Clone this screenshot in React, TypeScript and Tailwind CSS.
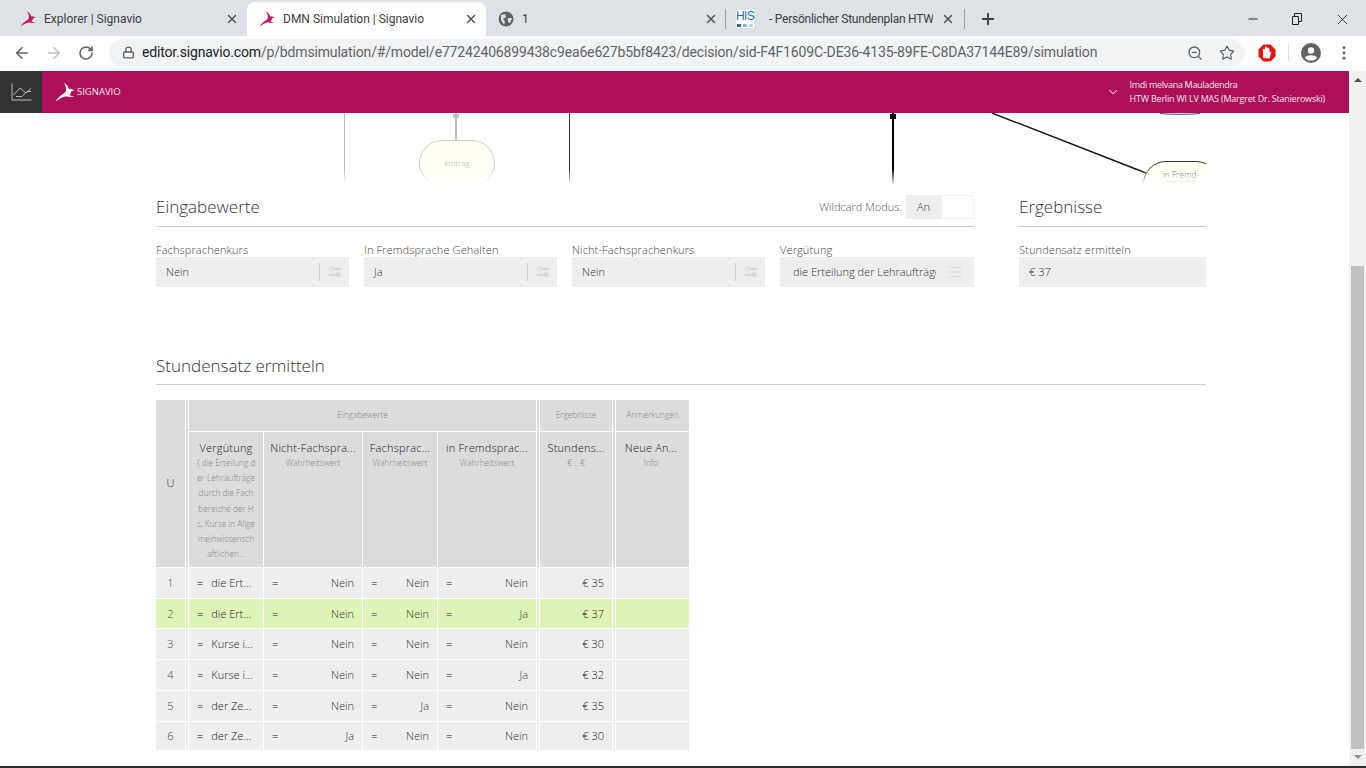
import { ArrowLeft, ArrowRight, ChevronDown, Lock, Minus, Plus, RotateCw, Star, X, ZoomOut } from 'lucide-react';

const Gazelle = ({ className }: { className: string }) => (
  <svg viewBox="0 0 24 24" className={className} fill="currentColor">
    <path d="M0.5 23.5 C3 19.5 6 16.5 9.5 14.5 C11 13.5 12.2 12.8 13 11.5 C13.8 8 13 4 10.5 0.5 C14 2.5 16.2 5.5 16.6 8.4 L19 8 L23.5 10.2 L19.5 11 C19 13 18.5 14.5 17 16 L23 17.5 C19 18.2 15.5 18 13.5 17 C9 18 4.5 20.5 0.5 23.5 Z" />
  </svg>
);

const ChartIcon = () => (
  <svg viewBox="0 0 21 18" className="h-[18px] w-[21px]" fill="none" stroke="#c9c9c9" strokeWidth="0.9">
    <path d="M1 0.5 V17 H20.5" />
    <path d="M2.5 12 L9 5 L15 10 L20 5.5" />
    <path d="M5 13.5 H11 L16 8.5 H20" />
  </svg>
);

const SliderIcon = () => (
  <svg viewBox="0 0 12 12" className="h-3 w-3" fill="none" stroke="#d6d6d6" strokeWidth="1.4">
    <circle cx="2.6" cy="2.8" r="1.9" strokeWidth="1" />
    <path d="M5 2.8 H12" strokeWidth="2" />
    <path d="M0 8.8 H7" strokeWidth="2" />
    <circle cx="9.2" cy="8.8" r="2.5" fill="#d6d6d6" stroke="none" />
  </svg>
);

const ListIcon = () => (
  <svg viewBox="0 0 12 12" className="h-3 w-3" fill="none" stroke="#d6d6d6" strokeWidth="1">
    <path d="M0 1.5 H2 M3.5 1.5 H12 M0 6 H2 M3.5 6 H12 M0 10.5 H2 M3.5 10.5 H12" />
  </svg>
);

const Field = ({ label, value, icon = 'slider' }: { label: string; value: string; icon?: string }) => (
  <div>
    <div className="h-[14px] text-[11px] leading-[14px] font-light tracking-[0.12px] text-[#444]">{label}</div>
    <div className="flex h-[30px] items-center bg-[#eeeeee] text-[11px] font-light text-[#333]">
      {icon === 'slider' && (
        <>
          <span className="flex-1 pl-[10px]">{value}</span>
          <span className="h-[18px] w-px bg-[#cfcfcf]" />
          <span className="flex w-[29px] justify-center"><SliderIcon /></span>
        </>
      )}
      {icon === 'list' && (
        <>
          <span className="ml-[13px] flex-1 overflow-hidden whitespace-nowrap">{value}</span>
          <span className="flex w-[38px] justify-center"><ListIcon /></span>
        </>
      )}
      {icon === 'none' && <span className="flex-1 pl-[10px]">{value}</span>}
    </div>
  </div>
);

const Head = ({ title, sub }: { title: string; sub: string[] }) => (
  <th className="border-r border-b border-white pt-[8px] align-top font-light">
    <div className="text-[11px] leading-[15px] tracking-[0.2px] text-[#222]">{title}</div>
    {sub.map((s) => (
      <div key={s} className="text-[8.3px] leading-[15.2px] text-[#888]">{s}</div>
    ))}
  </th>
);

const rows = [
  { n: 1, v: 'die Ert...', a: 'Nein', b: 'Nein', c: 'Nein', r: '€ 35', h: 'h-[31px]', bg: 'bg-[#eeeeee]' },
  { n: 2, v: 'die Ert...', a: 'Nein', b: 'Nein', c: 'Ja', r: '€ 37', h: 'h-[30px]', bg: 'bg-[#dff5b8]' },
  { n: 3, v: 'Kurse i...', a: 'Nein', b: 'Nein', c: 'Nein', r: '€ 30', h: 'h-[31px]', bg: 'bg-[#eeeeee]' },
  { n: 4, v: 'Kurse i...', a: 'Nein', b: 'Nein', c: 'Ja', r: '€ 32', h: 'h-[31px]', bg: 'bg-[#eeeeee]' },
  { n: 5, v: 'der Ze...', a: 'Nein', b: 'Ja', c: 'Nein', r: '€ 35', h: 'h-[31px]', bg: 'bg-[#eeeeee]' },
  { n: 6, v: 'der Ze...', a: 'Ja', b: 'Nein', c: 'Nein', r: '€ 30', h: 'h-[29px]', bg: 'bg-[#eeeeee]' },
];

const EqCell = ({ value, left }: { value: string; left?: boolean }) => (
  <td className="border-r border-b border-white px-[8px] pt-[1px]">
    <div className="flex items-center justify-between">
      <span className="font-normal text-[#222]">=</span>
      <span className={left ? 'flex-1 pl-[8px] text-left text-[#222]' : 'text-[#333]'}>{value}</span>
    </div>
  </td>
);

const Diagram = () => (
  <div className="relative h-[72px] overflow-hidden">
    <div className="absolute top-0 left-[188px] h-full w-px bg-[#bdbdbd]" />
    <div className="absolute top-0 left-[299px] h-[28px] w-[2px] bg-[#bdbdbd]" />
    <div className="absolute top-[1px] left-[297px] h-[4px] w-[6px] bg-[#bdbdbd]" />
    <div className="absolute top-[27px] left-[263px] flex h-[46px] w-[76px] items-center justify-center rounded-[23px] border border-[#cfcfc4] bg-[#fffff4] text-[8px] font-light text-[#aaa]">
      Eintrag
    </div>
    <div className="absolute top-0 left-[413px] h-full w-px bg-[#333]" />
    <div className="absolute top-0 left-[736px] h-full w-[2px] bg-black" />
    <div className="absolute top-[1px] left-[734px] h-[5px] w-[6px] bg-black" />
    <svg className="absolute top-0 left-[830px] h-[72px] w-[220px]" viewBox="0 0 220 72" fill="none">
      <path d="M6 0 L160 60" stroke="#111" strokeWidth="1.4" />
      <path d="M174 0.5 C186 1.6 202 1.6 214 0.5" stroke="#222" strokeWidth="0.8" />
    </svg>
    <div className="absolute top-[48px] left-[987px] h-[46px] w-[76px] rounded-[23px] border border-[#333] bg-[#fffff4] pt-[9px] text-center text-[8.5px] leading-[8px] font-light text-[#444]">
      in Fremd-<br />sprache
    </div>
    <div className="absolute right-0 bottom-0 left-0 h-[16px] bg-gradient-to-b from-transparent to-white" />
  </div>
);

export default function App() {
  return (
    <div className="flex h-screen w-full flex-col overflow-hidden bg-white font-['Open_Sans',sans-serif]">
      {/* browser tabs */}
      <div className="flex h-[36px] items-end bg-[#dee1e6] pl-[8px] font-['Roboto',sans-serif] text-[12px] text-[#3c4043]">
        <div className="flex h-[34px] w-[239px] items-center pr-[8px] pl-[12px]">
          <Gazelle className="h-[16px] w-[16px] text-[#c2185b]" />
          <span className="ml-[8px] flex-1">Explorer | Signavio</span>
          <X size={14} strokeWidth={2.5} className="text-[#555]" />
        </div>
        <div className="flex h-[34px] w-[239px] items-center rounded-t-lg bg-white pr-[8px] pl-[12px]">
          <Gazelle className="h-[16px] w-[16px] text-[#c2185b]" />
          <span className="ml-[8px] flex-1">DMN Simulation | Signavio</span>
          <X size={14} strokeWidth={2.5} className="text-[#555]" />
        </div>
        <div className="flex h-[34px] w-[240px] items-center pl-[12px]">
          <svg viewBox="0 0 16 16" className="h-[16px] w-[16px]">
            <circle cx="8" cy="8" r="7.5" fill="#5f6368" />
            <path d="M3 4 L7 3 L8 6 L5 8 L7 11 L6 14 L3 9 Z M10 7 L14 7 L12 12 L10 11 Z" fill="#dee1e6" />
          </svg>
          <span className="ml-[8px] flex-1">1</span>
          <X size={14} strokeWidth={2.5} className="text-[#555]" />
          <span className="ml-[7px] h-[20px] w-px bg-[#9aa0a6]" />
        </div>
        <div className="flex h-[34px] w-[239px] items-center pl-[10px]">
          <span className="flex h-[18px] w-[18px] flex-col items-center bg-white font-['Liberation_Sans',sans-serif] text-[12px] leading-[13px] tracking-[-0.6px] text-[#1f6fb2]">
            HIS
            <span className="mt-[1px] flex w-[16px] justify-between">
              <span className="h-[3px] w-[4px] bg-[#1f6fb2]" />
              <span className="h-[3px] w-[4px] bg-[#8fb4d6]" />
              <span className="h-[3px] w-[4px] bg-[#c4d6e6]" />
            </span>
          </span>
          <span className="ml-[15px] w-[164px] overflow-hidden tracking-[-0.25px] whitespace-nowrap">- Persönlicher Stundenplan HTW</span>
          <X size={14} strokeWidth={2.5} className="ml-[8px] text-[#555]" />
          <span className="ml-[9px] h-[20px] w-px bg-[#9aa0a6]" />
        </div>
        <div className="flex h-[34px] flex-1 items-center pl-[14px]">
          <Plus size={18} strokeWidth={2.5} className="text-[#3c4043]" />
          <div className="flex-1" />
          <Minus size={14} className="mr-[30px] text-[#222]" />
          <svg viewBox="0 0 12 12" className="mr-[32px] h-[12px] w-[12px]" fill="none" stroke="#222">
            <path d="M2.5 3.5 H8.5 V11.5 H2.5 Z M4.5 3.5 V0.5 H11.5 V8.5 H8.5" />
          </svg>
          <X size={17} strokeWidth={1.2} className="mr-[15px] text-[#222]" />
        </div>
      </div>

      {/* browser toolbar */}
      <div className="flex h-[35px] items-center bg-white pb-[2px] text-[#5f6368]">
        <ArrowLeft size={18} strokeWidth={2.2} className="ml-[13px]" />
        <ArrowRight size={18} strokeWidth={2.2} className="ml-[14px] text-[#bdc1c6]" />
        <RotateCw size={16} strokeWidth={2.4} className="ml-[15px]" />
        <div className="ml-[15px] flex h-[28px] w-[1136px] items-center rounded-full bg-[#f1f3f4] pl-[13px] font-['Roboto',sans-serif] text-[14px]">
          <Lock size={13} strokeWidth={2.6} className="mr-[7px]" />
          <span className="flex-1 tracking-[-0.16px] whitespace-nowrap">
            <span className="text-[#202124]">editor.signavio.com</span>
            /p/bdmsimulation/#/model/e77242406899438c9ea6e627b5bf8423/decision/sid-F4F1609C-DE36-4135-89FE-C8DA37144E89/simulation
          </span>
          <ZoomOut size={16} className="mr-[16px]" />
          <Star size={16} strokeWidth={1.8} className="mr-[10px]" />
        </div>
        <svg viewBox="0 0 18 18" className="ml-[13px] h-[18px] w-[18px]">
          <path d="M5.5 0.5 H12.5 L17.5 5.5 V12.5 L12.5 17.5 H5.5 L0.5 12.5 V5.5 Z" fill="#e8130f" />
          <path d="M5 14 V6 C5 4.4 6.8 4.4 7 5.6 V3.4 C7 2.2 8.8 2.2 9 3.4 V4.4 C9.4 3.4 11.4 3.6 11.4 5 V8.4 L13.4 7.6 L11.6 14.6 Z" fill="#fff" />
        </svg>
        <span className="ml-[12px] h-[17px] w-px bg-[#dadce0]" />
        <svg viewBox="0 0 20 20" className="ml-[12px] h-[20px] w-[20px]">
          <circle cx="10" cy="10" r="10" fill="#5f6368" />
          <circle cx="10" cy="7.5" r="3.2" fill="#fff" />
          <path d="M3.8 14.8 C5.5 11.5 14.5 11.5 16.2 14.8 C14.5 16.8 12.5 17.6 10 17.6 C7.5 17.6 5.5 16.8 3.8 14.8 Z" fill="#fff" />
        </svg>
        <svg viewBox="0 0 4 16" className="ml-[21px] h-[14px] w-[4px]" fill="#5f6368">
          <circle cx="2" cy="2" r="1.7" />
          <circle cx="2" cy="8" r="1.7" />
          <circle cx="2" cy="14" r="1.7" />
        </svg>
      </div>

      <div className="flex min-h-0 flex-1">
        <div className="flex min-w-0 flex-1 flex-col">
          {/* app header */}
          <header className="flex h-[42px] items-center bg-[#ad0f58] text-white">
            <div className="flex h-full w-[42px] items-center justify-center bg-[#333333]">
              <ChartIcon />
            </div>
            <Gazelle className="ml-[13px] h-[20px] w-[20px] text-white" />
            <span className="ml-[2px] text-[9.5px] text-[#fbe4ef]">SIGNAVIO</span>
            <div className="flex-1" />
            <ChevronDown size={14} strokeWidth={1.8} className="mr-[10px] text-[#f8dbe8]" />
            <div className="mr-[24px] text-[9px] leading-[14px] text-[#fbe4ef]">
              <div className="tracking-[-0.3px]">Imdi melvana Mauladendra</div>
              <div className="tracking-[-0.21px]">HTW Berlin WI LV MAS (Margret Dr. Stanierowski)</div>
            </div>
          </header>

          {/* page */}
          <main className="ml-[156px] w-[1050px]">
            <Diagram />

            <div className="mt-[10px] grid grid-cols-[818px_187px] gap-x-[45px]">
              <section>
                <div className="flex h-[32px] items-start justify-between border-b border-[#cccccc]">
                  <h2 className="text-[17px] leading-[24px] font-light text-[#333]">Eingabewerte</h2>
                  <div className="flex h-[24px] items-center">
                    <span className="mr-[4px] text-[11px] font-light text-[#555]">Wildcard Modus:</span>
                    <span className="flex h-full w-[35px] items-center justify-center bg-[#eeeeee] text-[11px] font-light text-[#333]">An</span>
                    <span className="h-full w-[33px] border border-[#eeeeee] bg-white" />
                  </div>
                </div>
                <div className="mt-[16px] grid grid-cols-[193px_193px_193px_194px] gap-x-[15px]">
                  <Field label="Fachsprachenkurs" value="Nein" />
                  <Field label="In Fremdsprache Gehalten" value="Ja" />
                  <Field label="Nicht-Fachsprachenkurs" value="Nein" />
                  <Field label="Vergütung" value="die Erteilung der Lehraufträge durch die Fachbereiche" icon="list" />
                </div>
              </section>
              <section>
                <div className="h-[32px] border-b border-[#cccccc]">
                  <h2 className="text-[17px] leading-[24px] font-light text-[#333]">Ergebnisse</h2>
                </div>
                <div className="mt-[16px]">
                  <Field label="Stundensatz ermitteln" value="€ 37" icon="none" />
                </div>
              </section>
            </div>

            <h2 className="mt-[67px] h-[31px] border-b border-[#cccccc] text-[17px] leading-[24px] font-light text-[#333]">
              Stundensatz ermitteln
            </h2>

            <table className="mt-[15px] w-[533px] table-fixed border-separate border-spacing-0 text-[11px] font-light">
              <colgroup>
                <col className="w-[33px]" />
                <col className="w-[75px]" />
                <col className="w-[99px]" />
                <col className="w-[75px]" />
                <col className="w-[102px]" />
                <col className="w-[76px]" />
                <col className="w-[73px]" />
              </colgroup>
              <thead className="bg-[#dcdcdc]">
                <tr className="h-[32px] text-[8.3px] text-[#888]">
                  <th rowSpan={2} className="border-r-[4px] border-b border-double border-r-white border-b-white text-[11px] font-light text-[#333]">U</th>
                  <th colSpan={4} className="border-r-[4px] border-b border-double border-r-white border-b-white font-light">Eingabewerte</th>
                  <th className="border-r-[4px] border-b border-double border-r-white border-b-white font-light">Ergebnisse</th>
                  <th className="border-b border-white font-light">Anmerkungen</th>
                </tr>
                <tr className="h-[136px]">
                  <Head title="Vergütung" sub={['{ die Erteilung d', 'er Lehraufträge', 'durch die Fach', 'bereiche der H', 's, Kurse in Allge', 'meinwissensch', 'aftlichen...']} />
                  <Head title="Nicht-Fachspra..." sub={['Wahrheitswert']} />
                  <Head title="Fachsprac..." sub={['Wahrheitswert']} />
                  <th className="border-r-[4px] border-b border-double border-r-white border-b-white pt-[8px] align-top font-light">
                    <div className="text-[11px] leading-[15px] tracking-[0.2px] text-[#222]">in Fremdsprac...</div>
                    <div className="text-[8.3px] leading-[15.2px] text-[#888]">Wahrheitswert</div>
                  </th>
                  <th className="border-r-[4px] border-b border-double border-r-white border-b-white pt-[8px] align-top font-light">
                    <div className="text-[11px] leading-[15px] tracking-[0.2px] text-[#222]">Stundens...</div>
                    <div className="text-[8.3px] leading-[15.2px] text-[#888]">€ .. €</div>
                  </th>
                  <th className="border-b border-white pt-[8px] pr-[3px] align-top font-light">
                    <div className="text-[11px] leading-[15px] tracking-[0.2px] text-[#222]">Neue An...</div>
                    <div className="text-[8.3px] leading-[15.2px] text-[#888]">Info</div>
                  </th>
                </tr>
              </thead>
              <tbody>
                {rows.map((row) => (
                  <tr key={row.n} className={`${row.h} ${row.bg}`}>
                    <td className="border-r-[4px] border-b border-double border-r-white border-b-white pt-[1px] text-center text-[#444]">{row.n}</td>
                    <EqCell value={row.v} left />
                    <EqCell value={row.a} />
                    <EqCell value={row.b} />
                    <td className="border-r-[4px] border-b border-double border-r-white border-b-white px-[8px] pt-[1px]">
                      <div className="flex items-center justify-between">
                        <span className="font-normal text-[#222]">=</span>
                        <span className="text-[#333]">{row.c}</span>
                      </div>
                    </td>
                    <td className="border-r-[4px] border-b border-double border-r-white border-b-white pt-[1px] pr-[8px] text-right text-[#222]">{row.r}</td>
                    <td className="border-b border-white" />
                  </tr>
                ))}
              </tbody>
            </table>
          </main>
        </div>

        {/* scrollbar */}
        <div className="flex w-[17px] flex-col items-center bg-[#f1f1f1]">
          <div className="mt-[7px] h-0 w-0 border-x-[4px] border-b-[4px] border-x-transparent border-b-[#505050]" />
          <div className="mt-[184px] h-[483px] w-[13px] bg-[#c1c1c1]" />
          <div className="mt-[6px] h-0 w-0 border-x-[4px] border-t-[4px] border-x-transparent border-t-[#909090]" />
        </div>
      </div>

      <div className="h-[2px] bg-[#2b2b2b]" />
    </div>
  );
}
